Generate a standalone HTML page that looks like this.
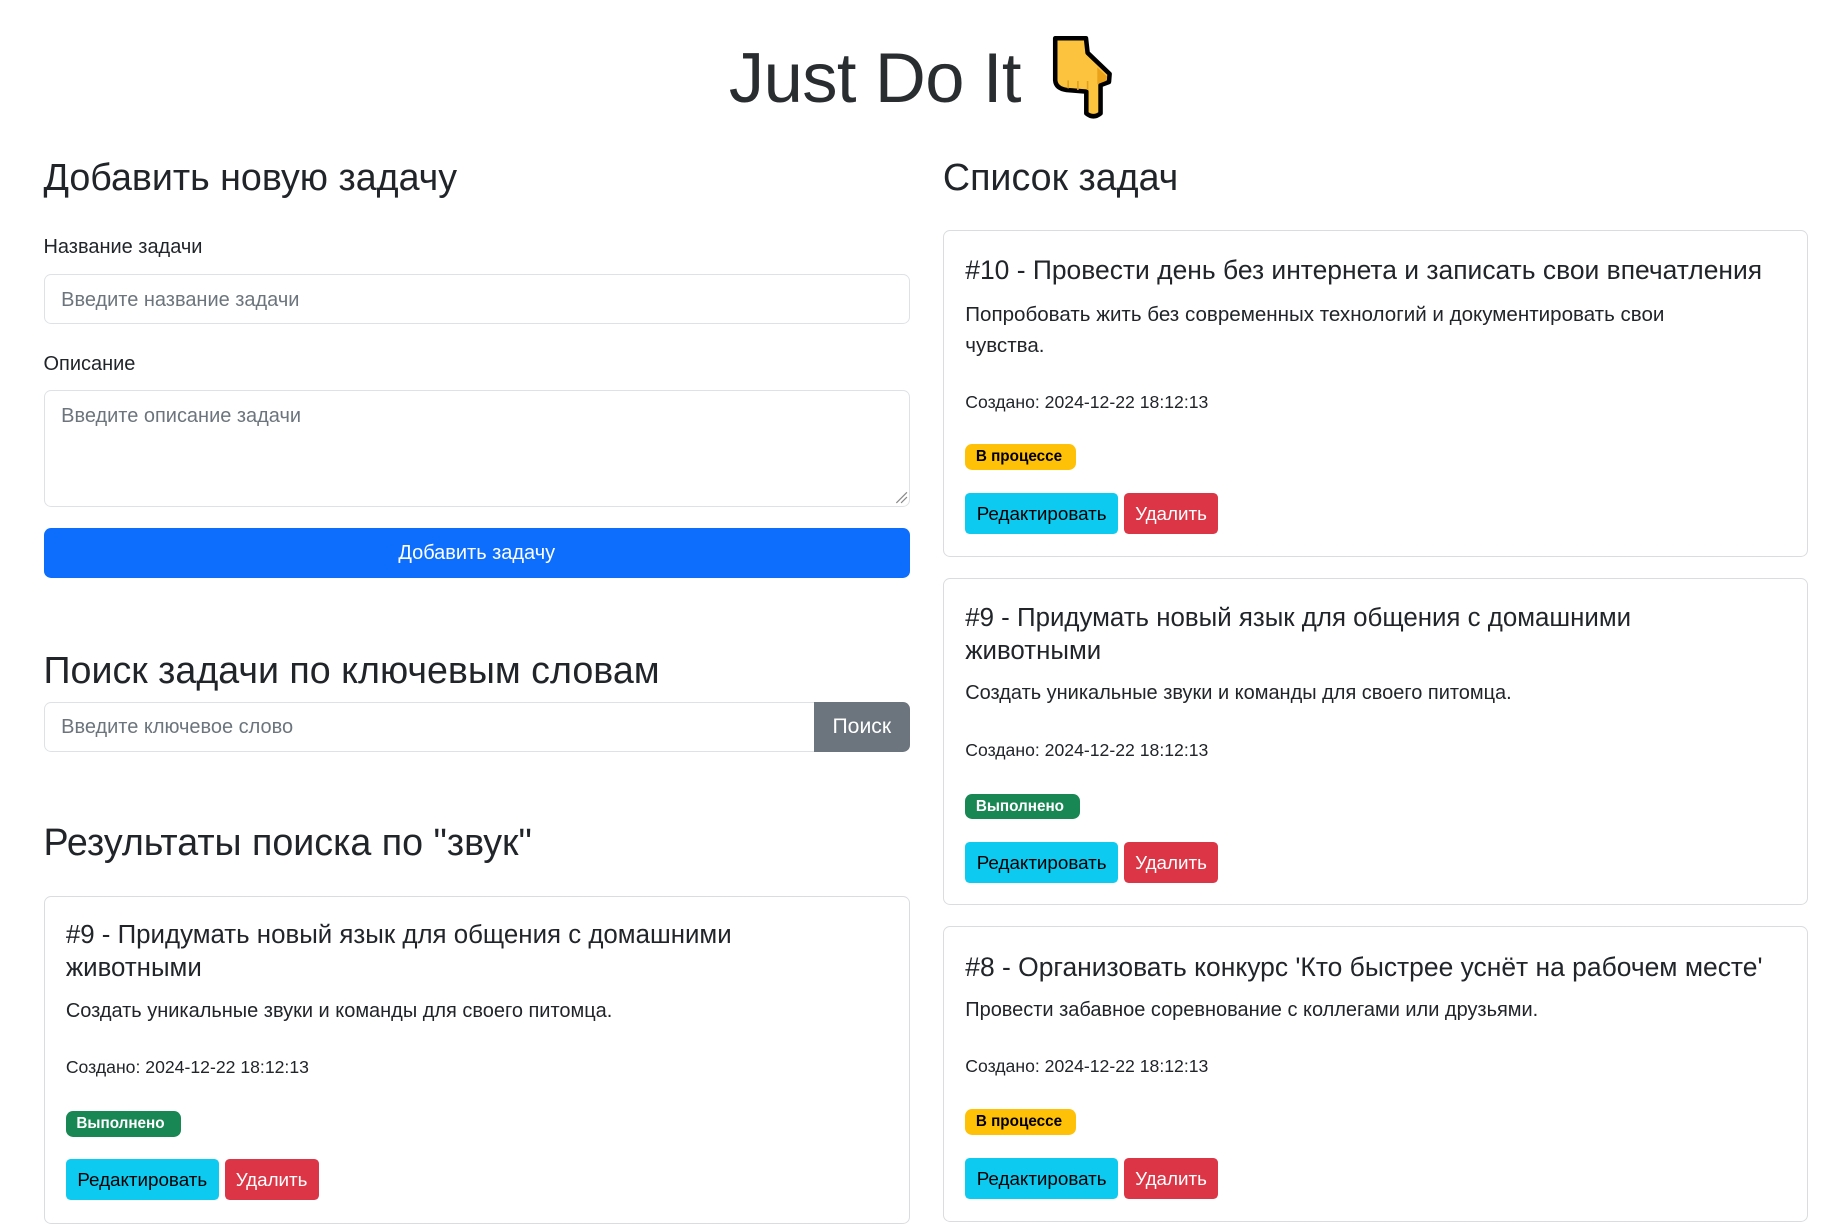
<!DOCTYPE html>
<html><head><meta charset="utf-8"><style>
html,body{margin:0;padding:0;background:#fff}
body{zoom:1.1757;width:1571px;height:1045px;position:relative;overflow:hidden;font-family:"Liberation Sans",sans-serif;color:#212529}
.t{position:absolute;white-space:nowrap}
.box{position:absolute;border:1px solid #dee2e6;border-radius:6px;box-sizing:border-box;background:#fff}
.ph{color:#6c757d;font-size:17px}
.card{position:absolute;border:1px solid #dadcdf;border-radius:6px;box-sizing:border-box}
.ct{font-size:22px;line-height:28px}
.cd{font-size:17px;line-height:27px}
.cr{font-size:15px}
.badge{position:absolute;height:22px;border-radius:6px;font-size:13px;font-weight:bold;line-height:22px;padding:0 9px;box-sizing:border-box}
.btn{position:absolute;height:35px;border-radius:4px;font-size:16px;line-height:35px;text-align:center;box-sizing:border-box}
.bi{background:#0dcaf0;color:#000}
.bd{background:#dc3545;color:#fff}
</style></head><body>

<div class="t" style="left:620px;top:28px;font-size:60px;line-height:76px;color:#2a2d30;letter-spacing:-0.5px">Just Do It</div>
<svg style="position:absolute;left:894px;top:30px" width="54" height="73" viewBox="10 40 190 265">
<path d="M20 50 L115 50 L120 95 L188 160 L186 185 L160 195 L160 282 Q138 300 116 282 L116 215 L55 210 Q22 205 20 180 Z" fill="#fcc43e" stroke="#000" stroke-width="14" stroke-linejoin="round"/>
<path d="M150 140 L180 168 L176 182 L150 192 Z" fill="#e9a21a"/>
<path d="M60 180 L60 205 M90 182 L90 210 M120 182 L120 210" stroke="#e0a020" stroke-width="5"/>
</svg>

<div class="t" style="left:37px;top:131px;font-size:32px;line-height:40px">Добавить новую задачу</div>
<div class="t" style="left:37px;top:200px;font-size:17px;line-height:22px">Название задачи</div>
<div class="box" style="left:37px;top:233px;width:737px;height:43px"></div>
<div class="t ph" style="left:52px;top:245px;line-height:22px">Введите название задачи</div>
<div class="t" style="left:37px;top:299px;font-size:17px;line-height:22px">Описание</div>
<div class="box" style="left:37px;top:332px;width:737px;height:99px"></div>
<div class="t ph" style="left:52px;top:344px;line-height:22px">Введите описание задачи</div>
<svg style="position:absolute;left:760px;top:417px" width="12" height="12"><path d="M2 11L11 2M6 11L11 6" stroke="#888" stroke-width="1"/></svg>
<div class="btn" style="left:37px;top:449px;width:737px;height:43px;line-height:43px;background:#0d6efd;color:#fff;font-size:17px;border-radius:6px">Добавить задачу</div>

<div class="t" style="left:37px;top:550px;font-size:32px;line-height:40px">Поиск задачи по ключевым словам</div>
<div class="box" style="left:37px;top:597px;width:660px;height:43px;border-radius:6px 0 0 6px"></div>
<div class="t ph" style="left:52px;top:608px;line-height:22px">Введите ключевое слово</div>
<div class="btn" style="left:692px;top:597px;width:82px;height:43px;line-height:43px;background:#6c757d;color:#fff;font-size:18px;border-radius:0 6px 6px 0">Поиск</div>

<div class="t" style="left:37px;top:697px;font-size:32px;line-height:40px">Результаты поиска по "звук"</div>

<div class="card" style="left:37px;top:762px;width:737px;height:279px"></div>
<div class="t ct" style="left:56px;top:782px">#9 - Придумать новый язык для общения с домашними<br>животными</div>
<div class="t cd" style="left:56px;top:847px">Создать уникальные звуки и команды для своего питомца.</div>
<div class="t cr" style="left:56px;top:899px">Создано: 2024-12-22 18:12:13</div>
<div class="badge" style="left:56px;top:945px;width:98px;background:#198754;color:#fff">Выполнено</div>
<div class="btn bi" style="left:56px;top:986px;width:130px">Редактировать</div>
<div class="btn bd" style="left:191px;top:986px;width:80px">Удалить</div>

<div class="t" style="left:802px;top:131px;font-size:32px;line-height:40px">Список задач</div>

<div class="card" style="left:802px;top:196px;width:736px;height:278px"></div>
<div class="t ct" style="left:821px;top:216px;font-size:22.5px">#10 - Провести день без интернета и записать свои впечатления</div>
<div class="t cd" style="left:821px;top:254px;font-size:17.5px">Попробовать жить без современных технологий и документировать свои<br>чувства.</div>
<div class="t cr" style="left:821px;top:333px">Создано: 2024-12-22 18:12:13</div>
<div class="badge" style="left:821px;top:378px;width:94px;background:#ffc107;color:#000">В процессе</div>
<div class="btn bi" style="left:821px;top:419px;width:130px">Редактировать</div>
<div class="btn bd" style="left:956px;top:419px;width:80px">Удалить</div>

<div class="card" style="left:802px;top:492px;width:736px;height:278px"></div>
<div class="t ct" style="left:821px;top:512px">#9 - Придумать новый язык для общения с домашними<br>животными</div>
<div class="t cd" style="left:821px;top:577px">Создать уникальные звуки и команды для своего питомца.</div>
<div class="t cr" style="left:821px;top:629px">Создано: 2024-12-22 18:12:13</div>
<div class="badge" style="left:821px;top:675px;width:98px;background:#198754;color:#fff">Выполнено</div>
<div class="btn bi" style="left:821px;top:716px;width:130px">Редактировать</div>
<div class="btn bd" style="left:956px;top:716px;width:80px">Удалить</div>

<div class="card" style="left:802px;top:788px;width:736px;height:251px"></div>
<div class="t ct" style="left:821px;top:809px;font-size:22.5px">#8 - Организовать конкурс 'Кто быстрее уснёт на рабочем месте'</div>
<div class="t cd" style="left:821px;top:846px">Провести забавное соревнование с коллегами или друзьями.</div>
<div class="t cr" style="left:821px;top:898px">Создано: 2024-12-22 18:12:13</div>
<div class="badge" style="left:821px;top:943px;width:94px;background:#ffc107;color:#000">В процессе</div>
<div class="btn bi" style="left:821px;top:985px;width:130px">Редактировать</div>
<div class="btn bd" style="left:956px;top:985px;width:80px">Удалить</div>

</body></html>
